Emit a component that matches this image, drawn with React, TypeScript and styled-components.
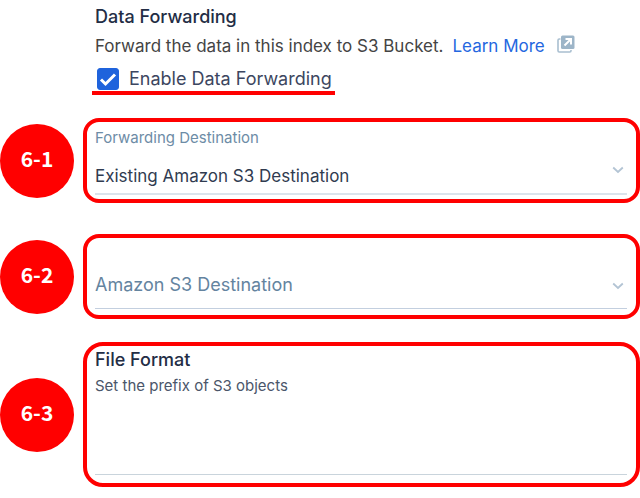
import React, { useState } from "react";
import styled, { createGlobalStyle } from "styled-components";

const GlobalStyle = createGlobalStyle`
  * { box-sizing: border-box; }
  body {
    margin: 0;
    background: #fff;
    color: #2c3850;
    font-family: Inter, Roboto, sans-serif;
    font-size: 17px;
    line-height: 24px;
  }
`;

const Page = styled.main`
  padding-top: 5px;
`;

const Intro = styled.header`
  display: flex;
  flex-direction: column;
  align-items: flex-start;
  margin-left: 92px;
`;

const Title = styled.h2`
  margin: 0;
  padding-left: 3px;
  font-size: 18px;
  line-height: 24px;
  font-weight: 500;
  color: #232d45;
`;

const Description = styled.p`
  display: flex;
  align-items: center;
  flex-wrap: wrap;
  margin: 5px 0 0;
  padding-left: 3px;
  color: #444;
`;

const LearnMore = styled.a`
  display: inline-flex;
  align-items: center;
  gap: 12px;
  margin-left: 9px;
  color: #2467e0;
  text-decoration: none;

  svg { margin-bottom: 4px; }
`;

const EnableRow = styled.label`
  display: flex;
  align-items: center;
  gap: 10px;
  margin-top: 9px;
  padding: 0 3px 0 5px;
  border-bottom: 4px solid #f00;
  font-size: 18px;
  color: #3c4660;
`;

const CheckFrame = styled.span`
  display: grid;
  width: 22px;
  height: 22px;

  > * { grid-area: 1 / 1; }
  svg { pointer-events: none; }
`;

const Checkbox = styled.input`
  appearance: none;
  width: 22px;
  height: 22px;
  margin: 0;
  border: 1px solid #1f63dc;
  border-radius: 3px;
  background: #fff;

  &:checked { background: #1f63dc; }
`;

const Steps = styled.ol`
  display: flex;
  flex-direction: column;
  margin: 23px 0 0;
  padding: 0;
  list-style: none;
`;

const Step = styled.li<{ $gap?: number }>`
  display: grid;
  grid-template-columns: 74px 1fr;
  align-items: center;
  gap: 9px;
  margin-top: ${(p) => p.$gap ?? 0}px;
`;

const Badge = styled.span`
  display: grid;
  place-items: center;
  height: 74px;
  padding-bottom: 6px;
  border-radius: 50%;
  background: #f00;
  color: #fff;
  font-family: "Noto Sans CJK JP", sans-serif;
  font-size: 21px;
  font-weight: 700;
`;

const Outline = styled.section<{ $radius?: number }>`
  display: flex;
  flex-direction: column;
  padding: 4px 9px 4px 8px;
  border: 4px solid #f00;
  border-radius: ${(p) => p.$radius ?? 16}px;
`;

const FieldLabel = styled.label`
  min-height: 24px;
  font-size: 15px;
  color: #6d8ca6;
`;

const SelectFrame = styled.div`
  display: grid;
  align-items: center;

  > * { grid-area: 1 / 1; }
  svg { justify-self: end; margin: 0 3px 6px 0; pointer-events: none; }
`;

const Select = styled.select<{ $empty?: boolean }>`
  appearance: none;
  width: 100%;
  height: ${(p) => (p.$empty ? 43 : 45)}px;
  margin: 0 0 ${(p) => (p.$empty ? 2 : 0)}px;
  padding: ${(p) => (p.$empty ? "0 24px 5px 0" : "8px 24px 0 0")};
  border: 0;
  border-bottom: ${(p) => (p.$empty ? "1px solid #c3cfdf" : "2px solid #dbe3eb")};
  border-radius: 0;
  background: transparent;
  color: ${(p) => (p.$empty ? "#64849f" : "#303b50")};
  font: inherit;
  font-size: ${(p) => (p.$empty ? 18 : 17)}px;
`;

const FormatTitle = styled.h3`
  margin: 0;
  font-size: 18px;
  line-height: 20px;
  font-weight: 500;
  color: #232d45;
`;

const FormatHint = styled.label`
  margin-top: 4px;
  font-size: 15px;
  color: #4b566a;
`;

const TextField = styled.input`
  width: 100%;
  height: 77px;
  margin: 0 0 4px;
  padding: 32px 0 0;
  border: 0;
  border-bottom: 1px solid #c9d4dc;
  background: transparent;
  color: #303b50;
  font: inherit;
`;

const Chevron = () => (
  <svg width="12" height="8" viewBox="0 0 12 8" fill="none" stroke="#b3c4d4" strokeWidth="1.8" aria-hidden="true">
    <path d="M1.2 1.5 6 6l4.8-4.5" />
  </svg>
);

const ExternalIcon = () => (
  <svg width="18" height="18" viewBox="0 0 18 18" fill="none" aria-hidden="true">
    <path d="M3.5 4H2.2Q1 4 1 5.2v10.6Q1 17 2.2 17h10.6q1.2 0 1.2-1.2V15" stroke="#a9bfd0" strokeWidth="1.6" />
    <rect x="4" y="0.5" width="13.5" height="13.5" rx="1.5" fill="#9db5c8" />
    <path d="M7.5 10.5l6-6M8.5 4H14v5.5" stroke="#fff" strokeWidth="2" />
  </svg>
);

export default function App() {
  const [enabled, setEnabled] = useState(true);
  const [bucket, setBucket] = useState("");

  return (
    <>
      <GlobalStyle />
      <Page>
        <Intro>
          <Title>Data Forwarding</Title>
          <Description>
            Forward the data in this index to S3 Bucket.
            <LearnMore href="#learn-more">
              Learn More <ExternalIcon />
            </LearnMore>
          </Description>
          <EnableRow>
            <CheckFrame>
              <Checkbox type="checkbox" checked={enabled} onChange={(e) => setEnabled(e.target.checked)} />
              <svg viewBox="0 0 22 22" fill="none" stroke="#fff" strokeWidth="3" aria-hidden="true">
                <path d="M4 11.5 8.5 16 18 6.5" />
              </svg>
            </CheckFrame>
            Enable Data Forwarding
          </EnableRow>
        </Intro>

        <Steps>
          <Step>
            <Badge>6-1</Badge>
            <Outline>
              <FieldLabel htmlFor="destination">Forwarding Destination</FieldLabel>
              <SelectFrame>
                <Select id="destination" defaultValue="existing">
                  <option value="existing">Existing Amazon S3 Destination</option>
                </Select>
                <Chevron />
              </SelectFrame>
            </Outline>
          </Step>
          <Step $gap={31}>
            <Badge>6-2</Badge>
            <Outline>
              <FieldLabel htmlFor="bucket" />
              <SelectFrame>
                <Select
                  id="bucket"
                  aria-label="Amazon S3 Destination"
                  $empty
                  value={bucket}
                  onChange={(e) => setBucket(e.target.value)}
                >
                  <option value="">Amazon S3 Destination</option>
                </Select>
                <Chevron />
              </SelectFrame>
            </Outline>
          </Step>
          <Step $gap={23}>
            <Badge>6-3</Badge>
            <Outline $radius={20}>
              <FormatTitle>File Format</FormatTitle>
              <FormatHint htmlFor="prefix">Set the prefix of S3 objects</FormatHint>
              <TextField id="prefix" type="text" />
            </Outline>
          </Step>
        </Steps>
      </Page>
    </>
  );
}
